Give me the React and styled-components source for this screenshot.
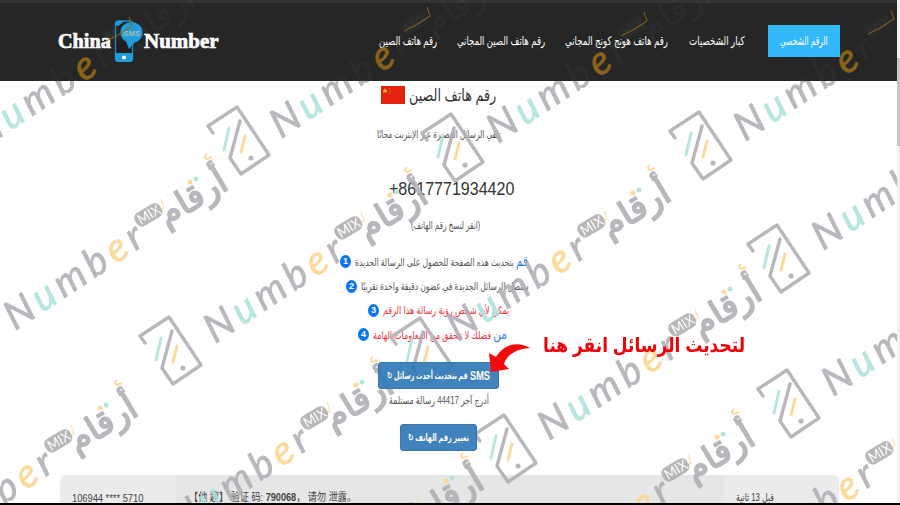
import React, { useLayoutEffect, useRef, useState } from 'react';
import styled, { createGlobalStyle, css } from 'styled-components';

const Global = createGlobalStyle`
  * { box-sizing: border-box; }
  html, body { margin: 0; padding: 0; background: #fff; overflow: hidden; }
`;

const arabic = '"Liberation Sans", "DejaVu Sans", sans-serif';

const Screen = styled.div`
  position: relative;
  width: 900px;
  height: 505px;
  display: flex;
  flex-direction: column;
  overflow: hidden;
  font-family: ${arabic};
  color: #444;
`;

const Body = styled.div`
  flex: 1;
  display: flex;
  min-height: 0;
`;

const Page = styled.main`
  width: 897px;
  display: flex;
  flex-direction: column;
`;

const Scrollbar = styled.div`
  width: 3px;
  background: #f0f0f0;
  padding-top: 58px;
`;

const Thumb = styled.div`
  height: 88px;
  background: #c6c6c6;
`;

const BlackEdge = styled.div`
  height: 2px;
  background: #000;
`;

const Header = styled.header`
  height: 81px;
  flex: none;
  background: #262626;
  border-top: 3px solid #333;
  display: flex;
  align-items: flex-start;
  padding-left: 58px;
`;

const Logo = styled.div`
  display: flex;
  align-items: center;
  width: 162px;
  height: 44px;
  margin: 16px 159px 0 0;
  color: #fff;
  font: bold 21px/46px "Liberation Serif", serif;
  -webkit-text-stroke: 0.7px #fff;
`;

const LogoIcon = styled.svg`
  width: 31px;
  height: 44px;
  flex: none;
  margin: 0 1px;
  -webkit-text-stroke: 0;
`;

const Nav = styled.nav`
  display: flex;
  align-items: center;
  height: 32px;
  margin-top: 22px;
  color: #fff;
  font-size: 12px;
`;

const NavItem = styled.a`
  display: flex;
  margin-right: ${(p) => p.$gap}px;
`;

const NavButton = styled.a`
  display: flex;
  align-items: center;
  justify-content: center;
  width: 72px;
  height: 32px;
  background: #33b8fc;
`;

const FitBox = styled.span`
  display: inline-flex;
  justify-content: flex-start;
  flex: none;
  width: ${(p) => p.$w}px;
  direction: ltr;
`;

const FitText = styled.span`
  display: inline-block;
  white-space: nowrap;
  flex: none;
  transform-origin: left center;
  unicode-bidi: isolate;
  direction: ${(p) => p.$dir};
`;

function Fit({ w, dir = 'rtl', children }) {
  const ref = useRef(null);
  const [scale, setScale] = useState(1);
  useLayoutEffect(() => {
    setScale(w / ref.current.offsetWidth);
  }, [w]);
  return (
    <FitBox $w={w}>
      <FitText ref={ref} $dir={dir} style={{ transform: `scaleX(${scale})` }}>
        {children}
      </FitText>
    </FitBox>
  );
}

const Main = styled.section`
  display: flex;
  flex-direction: column;
  height: 394px;
  flex: none;
  padding-top: 1px;
`;

const Line = styled.div`
  display: flex;
  align-items: center;
  gap: ${(p) => p.$gap || 0}px;
  height: ${(p) => p.$h}px;
  margin-top: ${(p) => p.$mt || 0}px;
  padding-left: ${(p) => p.$x}px;
  font-size: ${(p) => p.$size || 10.5}px;
  line-height: 1;
  color: ${(p) => p.$color || '#555'};
`;

const Flag = styled.svg`
  width: 24px;
  height: 18px;
`;

const Dot = styled.span`
  display: flex;
  align-items: center;
  justify-content: center;
  width: 11px;
  height: 13px;
  border-radius: 50%;
  background: #0b74f5;
  color: #fff;
  font: bold 9px/13px "Liberation Sans", sans-serif;
`;

const Blue = styled.span`
  color: #2a7af0;
  font-size: 14px;
`;

const Button = styled.button`
  position: relative;
  z-index: 1;
  display: flex;
  align-items: center;
  justify-content: center;
  gap: 2px;
  width: ${(p) => p.$w}px;
  height: 27px;
  border: 1px solid #2a6da6;
  border-radius: 3px;
  padding: 0;
  background: #337ab7;
  color: #fff;
  font: bold 10px/1 ${arabic};
  opacity: 0.93;
`;

const Latin = styled.span`
  font-size: 12px;
`;

const Table = styled.div`
  margin-left: 60px;
  width: 779px;
  flex: 1;
  display: grid;
  grid-template-columns: 116px 548px 1fr;
  border-radius: 6px 6px 0 0;
  overflow: hidden;
  font-size: 11px;
`;

const Cell = styled.div`
  display: flex;
  align-items: flex-start;
  height: 28px;
  padding: ${(p) => p.$pt || 17}px 0 0 ${(p) => p.$pl}px;
  line-height: 13px;
  color: #444;
  background: ${(p) => (p.$dark ? '#e6e6e6' : '#ebebeb')};
  font-family: "Liberation Sans", "Noto Sans CJK SC", "DejaVu Sans", sans-serif;
`;

const overlay = css`
  position: absolute;
  pointer-events: none;
`;

const Overlay = styled.svg`
  ${overlay}
  left: 0;
  top: 0;
  width: 897px;
  height: 503px;
`;

const Callout = styled.div`
  ${overlay}
  z-index: 2;
  left: 543px;
  top: 332px;
  height: 26px;
  color: #f00008;
  font: bold 20px/26px ${arabic};
`;

const Arrow = styled.svg`
  ${overlay}
  z-index: 2;
  left: 484px;
  top: 340px;
  width: 50px;
  height: 34px;
`;

const MARKS = [
  [117, 33], [415, 23], [632, 28], [879, 26],
  [149, 215], [349, 228], [592, 226], [957, 135],
  [683, 325], [59, 441], [315, 418], [967, 281],
  [676, 470], [405, 514], [880, 453],
];

const PHONES = [
  [237, 107], [451, 114], [699, 112], [777, 225],
  [169, 317], [420, 318], [504, 415], [787, 370],
];

const light = { line: '#b0aeb4', orange: '#fbd58f', cyan: '#aee3dc', pill: '#b0aeae', mix: '#fff' };
const dark = {
  line: 'rgba(255,255,255,0.055)',
  orange: '#8b6318',
  cyan: 'rgba(120,200,190,0.08)',
  pill: 'rgba(255,255,255,0.02)',
  mix: 'rgba(255,255,255,0.05)',
};

function Mark({ at, c, bold }) {
  return (
    <g transform={`translate(${at[0]} ${at[1]})`}>
      <g transform="translate(-134 116) rotate(-33.5)" fill={c.line}>
        <text
          fontFamily="Lato, sans-serif"
          fontStyle="italic"
          fontSize="40"
          textLength="158"
          x="0"
          y="0"
          stroke={bold ? c.line : 'none'}
          strokeWidth="0.7"
        >
          N<tspan fill={c.cyan} stroke={bold ? c.cyan : 'none'}>u</tspan>mb
          <tspan fill={c.orange} stroke={c.orange}>e</tspan>r
        </text>
      </g>
      <path d="M-11 8L1 2L15-7L12-16" fill="none" stroke={c.orange} strokeWidth="1.2" opacity="0.8" />
      <g transform="rotate(-31)">
        <rect x="-15" y="-8" width="29" height="15" rx="6" fill={c.pill} />
        <text y="4.500" textAnchor="middle" fontFamily="Lato, sans-serif" fontSize="14" textLength="24" lengthAdjust="spacingAndGlyphs" fill={c.mix}>
          MIX
        </text>
      </g>
      <g transform="translate(17 12) rotate(-31)">
        <text
          fontFamily="DejaVu Sans, sans-serif"
          fontSize="34"
          textLength="75"
          lengthAdjust="spacingAndGlyphs"
          fill={c.line}
          stroke={bold ? c.line : 'none'}
          strokeWidth="1.7"
          strokeLinejoin="round"
        >
          أرقام
        </text>
      </g>
      {bold && (
        <>
          <circle cx="41" cy="-33" r="2.500" fill={c.orange} />
          <circle cx="47" cy="-36" r="2.500" fill={c.cyan} />
          <path d="M58-61q-4 3 0 5l5-2" fill="none" stroke={c.orange} strokeWidth="2" />
        </>
      )}
    </g>
  );
}

function Phone({ at }) {
  return (
    <g transform={`translate(${at[0]} ${at[1]})`} fill="none" strokeLinecap="round" strokeLinejoin="round" strokeWidth="3.400">
      <path d="M-24 26L-29 19L0 0L32 48L4 67L-7 51L3 14" stroke={light.line} />
      <path d="M-8 21L-13 43" stroke={light.cyan} strokeWidth="3" />
      <path d="M8 29L4 45" stroke={light.orange} strokeWidth="3" />
      <circle cx="14" cy="51" r="2.600" fill={light.line} />
    </g>
  );
}

function Watermark() {
  return (
    <Overlay viewBox="0 0 897 503">
      <defs>
        <clipPath id="head"><path d="M0 0h897v81H0z" /></clipPath>
        <clipPath id="rest"><path d="M0 81h897v422H0z" /></clipPath>
      </defs>
      <g clipPath="url(#head)">
        {MARKS.filter((m) => m[1] < 190).map((m) => <Mark key={m.join()} at={m} c={dark} />)}
      </g>
      <g clipPath="url(#rest)" opacity="0.88">
        {MARKS.map((m) => <Mark key={m.join()} at={m} c={light} bold />)}
        {PHONES.map((p) => <Phone key={p.join()} at={p} />)}
      </g>
    </Overlay>
  );
}

export default function App() {
  return (
    <Screen>
      <Global />
      <Body>
        <Page>
          <Header>
            <Logo>
              <Fit w={53} dir="ltr">China</Fit>
              <LogoIcon viewBox="0 0 31 44">
                <rect x="3.500" y="2" width="17" height="40" rx="2.500" fill="#202020" stroke="#168bc5" strokeWidth="1.300" />
                <path d="M3 34h18v6q0 3-3 3H6q-3 0-3-3z" fill="#1e9bd8" />
                <path d="M3 6q0-4 4-4h6L6 7z" fill="#1e9bd8" />
                <circle cx="12" cy="38.500" r="2" fill="#fff" />
                <ellipse cx="19.500" cy="13.500" rx="11" ry="10.500" fill="#1e9bd8" />
                <path d="M14 22h10l-7 8z" fill="#1e9bd8" />
                <text x="19.500" y="16.500" textAnchor="middle" fontFamily="Liberation Sans" fontStyle="italic" fontSize="8" fill="#a9bdb0">SMS</text>
              </LogoIcon>
              <Fit w={75} dir="ltr">Number</Fit>
            </Logo>
            <Nav>
              <NavItem $gap={20}><Fit w={58}>رقم هاتف الصين</Fit></NavItem>
              <NavItem $gap={20}><Fit w={88}>رقم هاتف الصين المجاني</Fit></NavItem>
              <NavItem $gap={21}><Fit w={103}>رقم هاتف هونج كونج المجاني</Fit></NavItem>
              <NavItem $gap={23}><Fit w={56}>كبار الشخصيات</Fit></NavItem>
              <NavButton><Fit w={48}>الرقم الشخصي</Fit></NavButton>
            </Nav>
          </Header>
          <Main>
            <Line $x={381} $h={26} $gap={4} $size={17} $color="#333">
              <Flag viewBox="0 0 24 18">
                <path d="M0 0h24v18H0z" fill="#e4210c" />
                <path d="M4 2l.8 2h2L5.200 5.300l.6 2L4 6.100l-1.800 1.200.6-2L1.200 4h2z" fill="#ffcf20" />
                <path d="M8 2l1.500 2v2L8 8" fill="none" stroke="#f08c18" strokeDasharray="1 1" />
              </Flag>
              <Fit w={87}>رقم هاتف الصين</Fit>
            </Line>
            <Line $x={377} $h={20} $mt={16}><Fit w={124}>تلقي الرسائل القصيرة عبر الإنترنت مجانًا</Fit></Line>
            <Line $x={389} $h={24} $mt={32} $size={19} $color="#333"><Fit w={125} dir="ltr">+8617771934420</Fit></Line>
            <Line $x={411} $h={20} $mt={15}><Fit w={69}>(انقر لنسخ رقم الهاتف)</Fit></Line>
            <Line $x={340} $h={24} $mt={14} $gap={4}>
              <Dot>1</Dot><Fit w={173}><Blue>قم</Blue> بتحديث هذه الصفحة للحصول على الرسالة الجديدة</Fit>
            </Line>
            <Line $x={346} $h={24} $mt={1} $gap={4}>
              <Dot>2</Dot><Fit w={168}>ستصل الرسائل الجديدة في غضون دقيقة واحدة تقريبًا</Fit>
            </Line>
            <Line $x={368} $h={24} $gap={4} $color="#f0303c">
              <Dot>3</Dot><Fit w={126}>يمكن لأي شخص رؤية رسالة هذا الرقم</Fit>
            </Line>
            <Line $x={358} $h={24} $gap={4} $color="#f0303c">
              <Dot>4</Dot><Fit w={134}><Blue>من</Blue> فضلك لا تتحقق من المعلومات الهامة</Fit>
            </Line>
            <Line $x={378} $h={27} $mt={16}>
              <Button $w={121}>
                <Fit w={81}>قم بتحديث أحدث رسائل ↻</Fit>
                <Latin><Fit w={20} dir="ltr">SMS</Fit></Latin>
              </Button>
            </Line>
            <Line $x={389} $h={20} $mt={1}><Fit w={100}>أدرج آخر 44417 رسالة مستلمة</Fit></Line>
            <Line $x={400} $h={27} $mt={14}>
              <Button $w={77}><Fit w={61}>تغيير رقم الهاتف ↻</Fit></Button>
            </Line>
          </Main>
          <Table>
            <Cell $pl={12}><Fit w={71} dir="ltr">106944 **** 5710</Fit></Cell>
            <Cell $dark $pt={16} $pl={13}><Fit w={167} dir="ltr">【他 趣】 验证 码: <b>790068</b>， 请勿 泄露。</Fit></Cell>
            <Cell $pt={16} $pl={12}><Fit w={38}>قبل 13 ثانية</Fit></Cell>
          </Table>
        </Page>
        <Scrollbar><Thumb /></Scrollbar>
      </Body>
      <BlackEdge />
      <Watermark />
      <Callout><Fit w={202}>لتحديث الرسائل انقر هنا</Fit></Callout>
      <Arrow viewBox="0 0 50 34">
        <path d="M46 8C34 1 20 4 12 17L5 13 7 32 25 29 20 24C23 14 33 9 46 8z" fill="#f30a0a" />
      </Arrow>
    </Screen>
  );
}
